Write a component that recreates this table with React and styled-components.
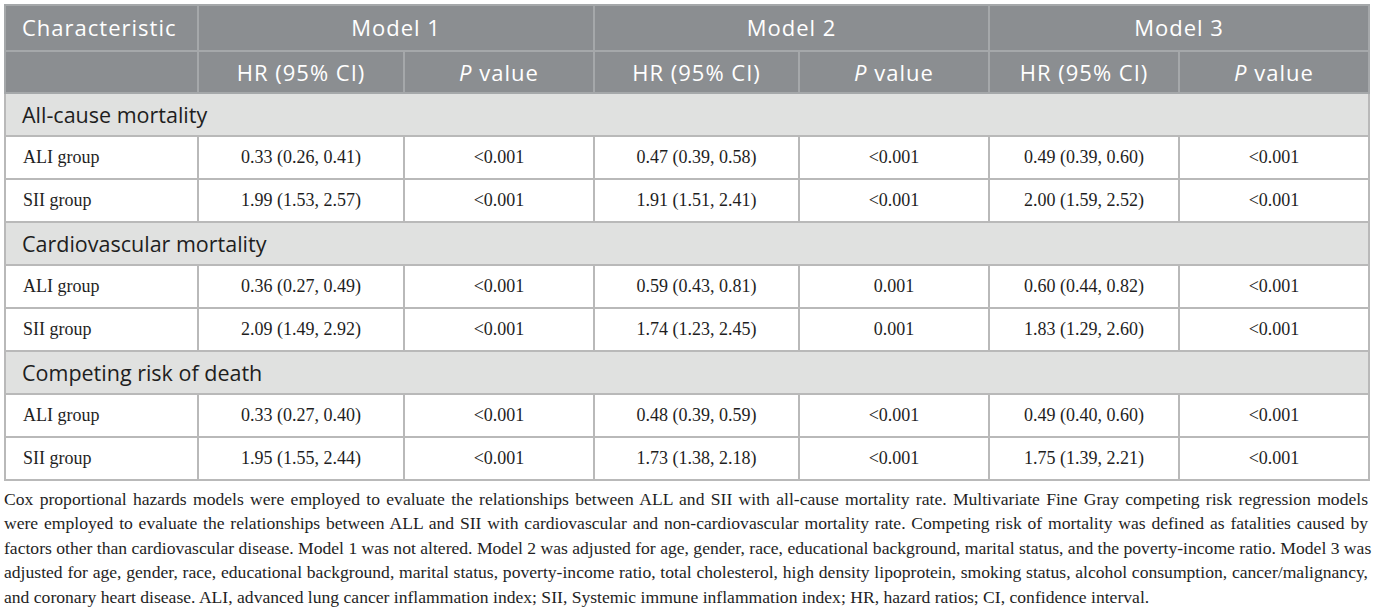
import React from 'react';
import styled, { createGlobalStyle } from 'styled-components';

const GlobalStyle = createGlobalStyle`
  body {
    margin: 0;
    background: #fff;
  }
`;

const Page = styled.div`
  padding: 4px 0 0 4px;
  width: 1364px;
`;

const Table = styled.table`
  width: 1364px;
  border-collapse: collapse;
  table-layout: fixed;
  border: 2px solid #b9b9b9;
`;

const HeadCell = styled.th`
  background: #8b8e91;
  color: #fff;
  font-family: 'Open Sans', 'Lato', sans-serif;
  font-weight: 400;
  font-size: 22px;
  letter-spacing: 1px;
  text-align: ${(p) => (p.$left ? 'left' : 'center')};
  padding: ${(p) => (p.$left ? '0 0 0 16px' : '0')};
  vertical-align: top;
  height: ${(p) => (p.$tall ? 44 : 40)}px;
  line-height: ${(p) => (p.$tall ? 43 : 40)}px;
  border: 2px solid #a5a8aa;
`;

const SectionCell = styled.td`
  background: #e0e1e0;
  color: #1e1e1e;
  font-family: 'Open Sans', 'Lato', sans-serif;
  font-size: 21.5px;
  height: 41px;
  padding: 0 0 0 16px;
  border: 2px solid #b9b9b9;
`;

const Cell = styled.td`
  font-family: 'Liberation Serif', 'Times New Roman', serif;
  font-size: 18px;
  color: #1e1e1e;
  height: 41px;
  padding: ${(p) => (p.$left ? '0 0 0 17px' : '0')};
  text-align: ${(p) => (p.$left ? 'left' : 'center')};
  border: 2px solid #b9b9b9;
`;

const Italic = styled.i`
  font-style: italic;
`;

const Note = styled.div`
  margin-top: 6px;
  font-family: 'Liberation Serif', 'Times New Roman', serif;
  font-size: 17.6px;
  color: #1e1e1e;
`;

const NoteLine = styled.div`
  line-height: 24.4px;
  white-space: nowrap;
  text-align: justify;
  text-align-last: ${(p) => (p.$last ? 'left' : 'justify')};
`;

const sections = [
  {
    title: 'All-cause mortality',
    rows: [
      ['ALI group', '0.33 (0.26, 0.41)', '<0.001', '0.47 (0.39, 0.58)', '<0.001', '0.49 (0.39, 0.60)', '<0.001'],
      ['SII group', '1.99 (1.53, 2.57)', '<0.001', '1.91 (1.51, 2.41)', '<0.001', '2.00 (1.59, 2.52)', '<0.001'],
    ],
  },
  {
    title: 'Cardiovascular mortality',
    rows: [
      ['ALI group', '0.36 (0.27, 0.49)', '<0.001', '0.59 (0.43, 0.81)', '0.001', '0.60 (0.44, 0.82)', '<0.001'],
      ['SII group', '2.09 (1.49, 2.92)', '<0.001', '1.74 (1.23, 2.45)', '0.001', '1.83 (1.29, 2.60)', '<0.001'],
    ],
  },
  {
    title: 'Competing risk of death',
    rows: [
      ['ALI group', '0.33 (0.27, 0.40)', '<0.001', '0.48 (0.39, 0.59)', '<0.001', '0.49 (0.40, 0.60)', '<0.001'],
      ['SII group', '1.95 (1.55, 2.44)', '<0.001', '1.73 (1.38, 2.18)', '<0.001', '1.75 (1.39, 2.21)', '<0.001'],
    ],
  },
];

const noteLines = [
  'Cox proportional hazards models were employed to evaluate the relationships between ALL and SII with all-cause mortality rate. Multivariate Fine Gray competing risk regression models',
  'were employed to evaluate the relationships between ALL and SII with cardiovascular and non-cardiovascular mortality rate. Competing risk of mortality was defined as fatalities caused by',
  'factors other than cardiovascular disease. Model 1 was not altered. Model 2 was adjusted for age, gender, race, educational background, marital status, and the poverty-income ratio. Model 3 was',
  'adjusted for age, gender, race, educational background, marital status, poverty-income ratio, total cholesterol, high density lipoprotein, smoking status, alcohol consumption, cancer/malignancy,',
  'and coronary heart disease. ALI, advanced lung cancer inflammation index; SII, Systemic immune inflammation index; HR, hazard ratios; CI, confidence interval.',
];

const colWidths = [193, 206, 190, 205, 190, 190, 190];

const SubHeads = () => (
  <>
    {[1, 2, 3].map((m) => (
      <React.Fragment key={m}>
        <HeadCell>HR (95% CI)</HeadCell>
        <HeadCell>
          <Italic>P</Italic> value
        </HeadCell>
      </React.Fragment>
    ))}
  </>
);

export default function App() {
  return (
    <>
      <GlobalStyle />
      <Page>
        <Table>
          <colgroup>
            {colWidths.map((w, i) => (
              <col key={i} style={{ width: w }} />
            ))}
          </colgroup>
          <thead>
            <tr>
              <HeadCell $left $tall>Characteristic</HeadCell>
              <HeadCell $tall colSpan={2}>Model 1</HeadCell>
              <HeadCell $tall colSpan={2}>Model 2</HeadCell>
              <HeadCell $tall colSpan={2}>Model 3</HeadCell>
            </tr>
            <tr>
              <HeadCell />
              <SubHeads />
            </tr>
          </thead>
          <tbody>
            {sections.map((s) => (
              <React.Fragment key={s.title}>
                <tr>
                  <SectionCell colSpan={7}>{s.title}</SectionCell>
                </tr>
                {s.rows.map((r, i) => (
                  <tr key={i}>
                    {r.map((v, j) => (
                      <Cell key={j} $left={j === 0}>{v}</Cell>
                    ))}
                  </tr>
                ))}
              </React.Fragment>
            ))}
          </tbody>
        </Table>
        <Note>
          {noteLines.map((l, i) => (
            <NoteLine key={i} $last={i === noteLines.length - 1}>{l}</NoteLine>
          ))}
        </Note>
      </Page>
    </>
  );
}
